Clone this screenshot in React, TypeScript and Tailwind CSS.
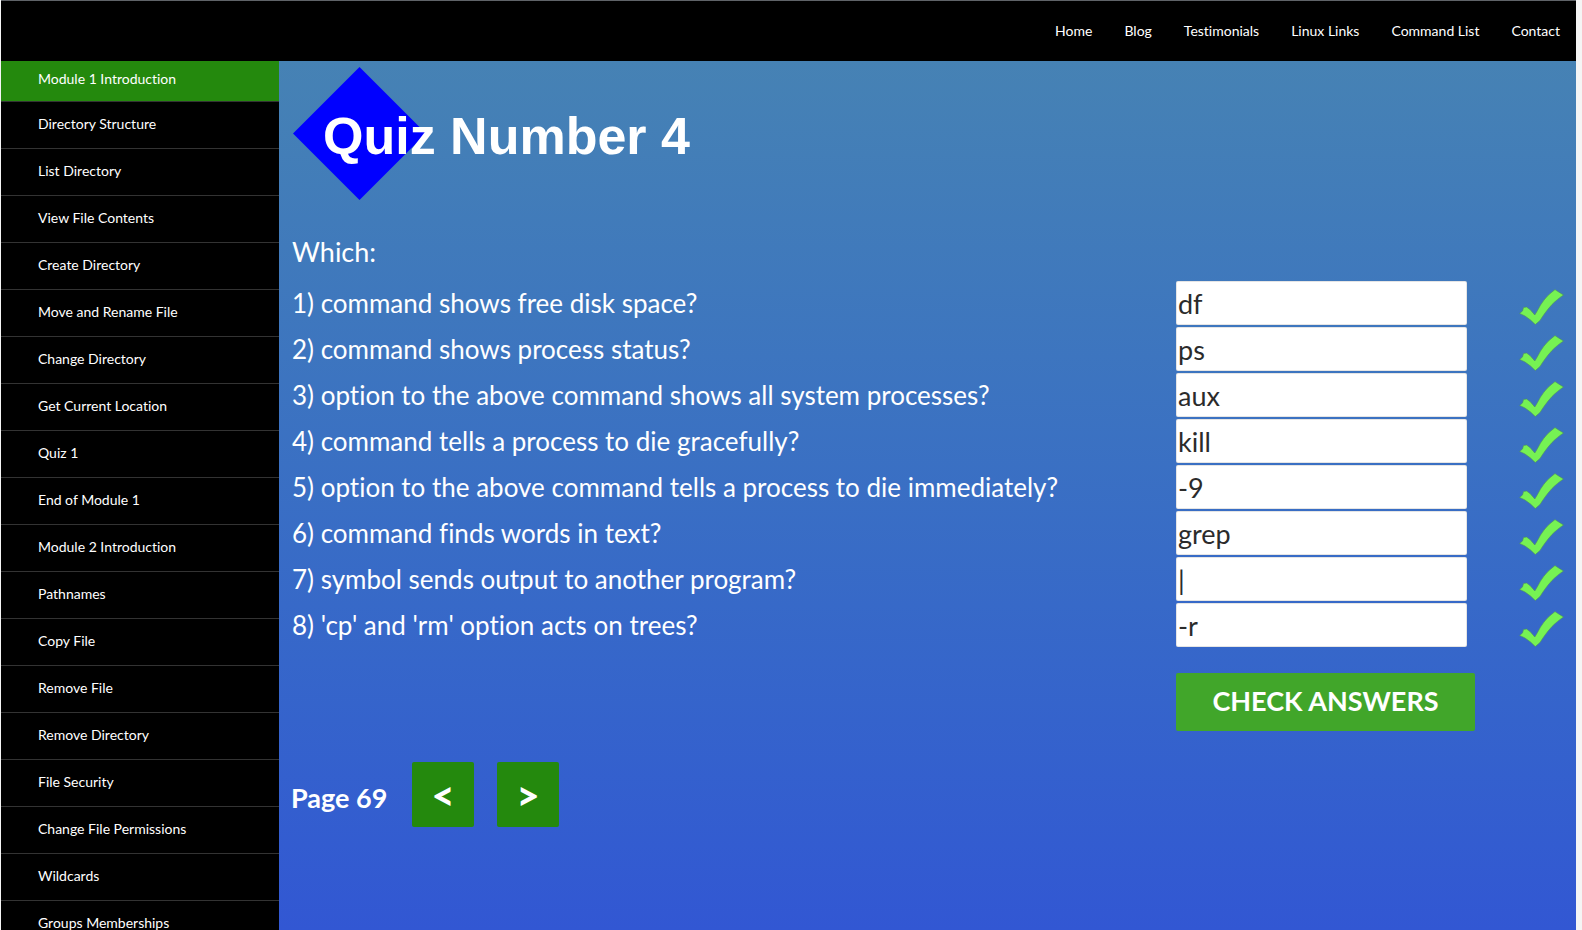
import { useState } from "react";

const topLinks = ["Home", "Blog", "Testimonials", "Linux Links", "Command List", "Contact"];

const lessons = [
  "Module 1 Introduction",
  "Directory Structure",
  "List Directory",
  "View File Contents",
  "Create Directory",
  "Move and Rename File",
  "Change Directory",
  "Get Current Location",
  "Quiz 1",
  "End of Module 1",
  "Module 2 Introduction",
  "Pathnames",
  "Copy File",
  "Remove File",
  "Remove Directory",
  "File Security",
  "Change File Permissions",
  "Wildcards",
  "Groups Memberships",
];

const questions = [
  { text: "1) command shows free disk space?", answer: "df" },
  { text: "2) command shows process status?", answer: "ps" },
  { text: "3) option to the above command shows all system processes?", answer: "aux" },
  { text: "4) command tells a process to die gracefully?", answer: "kill" },
  { text: "5) option to the above command tells a process to die immediately?", answer: "-9" },
  { text: "6) command finds words in text?", answer: "grep" },
  { text: "7) symbol sends output to another program?", answer: "|" },
  { text: "8) 'cp' and 'rm' option acts on trees?", answer: "-r" },
];

function Tick() {
  return (
    <svg viewBox="0 0 45 36" className="h-9 w-[45px]" role="img" aria-label="Correct">
      <path
        d="M0.6 24.4 L3.5 22 L4.5 18.6 L7.5 18 L11 20.5 L15.8 26 L18.5 21.5 C22 14.5 27 7.5 33 3 L36 0.6 L40 3.2 L44.5 6 C40 9 37 11.5 33 15.5 C28 21 24 26.5 21 31.5 L16.3 35.6 L11.5 31 L6 27 Z"
        fill="#76f253"
        stroke="#4f8f5c"
        strokeWidth="0.6"
      />
    </svg>
  );
}

function TopBar() {
  return (
    <header className="h-[61px] border-t border-[#5f6368] bg-black">
      <nav className="flex h-full items-center justify-end gap-8 pr-4 text-sm text-white" aria-label="Main">
        {topLinks.map((label) => (
          <a key={label} href="#">
            {label}
          </a>
        ))}
      </nav>
    </header>
  );
}

function Sidebar() {
  return (
    <nav className="h-full w-[278px] shrink-0 overflow-hidden bg-black text-sm text-white" aria-label="Lessons">
      <ul>
        {lessons.map((label, i) => (
          <li key={label}>
            <a
              href="#"
              className={
                i === 0
                  ? "flex h-[41px] items-center border-b border-[#333333] bg-[#24890d] pb-1 pl-[37px]"
                  : "flex h-[47px] items-center border-b border-[#333333] pb-0.5 pl-[37px]"
              }
            >
              {label}
            </a>
          </li>
        ))}
      </ul>
    </nav>
  );
}

function Quiz() {
  const [answers, setAnswers] = useState(questions.map((q) => q.answer));
  return (
    <main className="min-w-0 flex-1 bg-linear-to-b from-[#4682b4] to-[#3257d3] px-3 pt-1.5 text-[27px] text-white">
      <div className="grid h-[133px] items-center pl-0.5">
        <svg viewBox="0 0 133 133" className="col-start-1 row-start-1 size-[133px]" aria-hidden="true">
          <path d="M66.5 0 L133 66.5 L66.5 133 L0 66.5 Z" fill="#0000ff" />
        </svg>
        <h1 className="col-start-1 row-start-1 pt-1 pl-[30px] font-['Liberation_Sans',sans-serif] text-[52px] leading-none font-bold">
          Quiz Number 4
        </h1>
      </div>

      <p className="pt-[31px] pl-px leading-[42px]">Which:</p>

      <form className="mt-2" onSubmit={(e) => e.preventDefault()}>
        <div className="flex flex-col gap-0.5">
          {questions.map((q, i) => (
            <div key={q.text} className="flex h-11 items-center">
              <label htmlFor={`answer-${i}`} className="flex-1 pl-px text-[26px]">
                {q.text}
              </label>
              <input
                id={`answer-${i}`}
                type="text"
                value={answers[i]}
                onChange={(e) => setAnswers(answers.map((a, j) => (j === i ? e.target.value : a)))}
                className="h-11 w-[291px] rounded-xs border border-black/10 bg-white bg-clip-border px-px text-[#2b2b2b]"
              />
              <div className="flex w-[97px] justify-end pt-2">
                <Tick />
              </div>
            </div>
          ))}
        </div>
        <div className="flex justify-end pt-[26px] pr-[89px]">
          <button type="submit" className="h-[58px] w-[299px] rounded-xs bg-[#41a62a] pb-0.5 font-bold">
            CHECK ANSWERS
          </button>
        </div>
      </form>

      <div className="flex items-center pt-[31px]">
        <span className="w-[121px] pt-2 font-bold">Page 69</span>
        <div className="flex gap-[23px]">
          <button type="button" aria-label="Previous page" className="h-[65px] w-[62px] rounded-xs bg-[#24890d] text-[40px] leading-none font-black">
            &lt;
          </button>
          <button type="button" aria-label="Next page" className="h-[65px] w-[62px] rounded-xs bg-[#24890d] text-[40px] leading-none font-black">
            &gt;
          </button>
        </div>
      </div>
    </main>
  );
}

export default function App() {
  return (
    <div className="h-screen overflow-hidden border-l border-[#f5f5f5] bg-[#f5f5f5] pr-1.5 font-[Lato,sans-serif] [font-variant-ligatures:no-common-ligatures]">
      <div className="flex h-full flex-col">
        <TopBar />
        <div className="flex min-h-0 flex-1">
          <Sidebar />
          <Quiz />
        </div>
      </div>
    </div>
  );
}
